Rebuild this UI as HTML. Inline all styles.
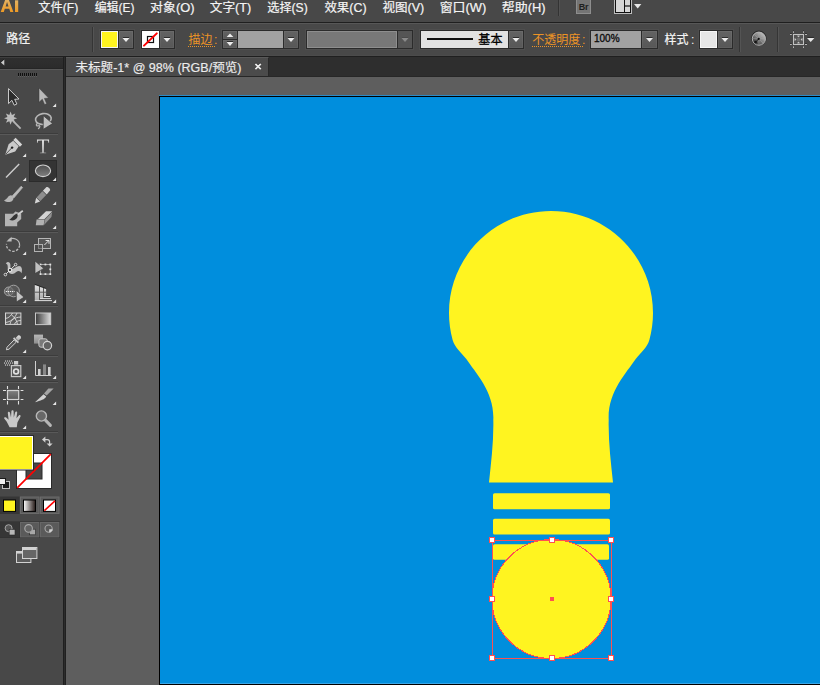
<!DOCTYPE html>
<html lang="zh"><head><meta charset="utf-8"><title>Adobe Illustrator</title>
<style>
html,body{margin:0;padding:0}
body{width:820px;height:685px;overflow:hidden;background:#484848;position:relative;font-family:"Liberation Sans",sans-serif;}
.g{display:block;position:static;margin:0;padding:0}
.a{position:absolute;box-sizing:border-box;display:block}
.t{position:absolute;overflow:hidden}
.t svg{position:absolute;left:0;top:0;display:block}
.t svg text{font-family:"Liberation Sans","Noto Sans CJK SC",sans-serif;font-size:12.3px;white-space:pre}
</style></head>
<body>
<header class="g" aria-label="menu bar">
<div class="a " style="left:0px;top:0px;width:820px;height:22px;background:#484848"></div>
<div class="a " style="left:0px;top:22px;width:820px;height:1px;background:#1f1f1f"></div>
<svg class="a" style="left:0px;top:0px" width="20" height="13" viewBox="0 0 20 13" ><defs><linearGradient id="lg" x1="0" y1="0" x2="0" y2="1"><stop offset="0" stop-color="#e2b264"/><stop offset="1" stop-color="#ee9a24"/></linearGradient></defs><path fill-rule="evenodd" d="M0.7 12L5.3 -0.5H8.8L13.4 12H10.3L9.3 8.8H4.8L3.8 12ZM5.6 6.5H8.5L7.05 1.9Z" fill="url(#lg)"/><rect x="15" y="0.3" width="3.2" height="11.7" fill="url(#lg)"/></svg>
<div class="t " style="left:37px;top:-1px;width:44px;height:19px"><svg width="44" height="19" viewBox="0 0 44 19"><text transform="translate(1.35 12.6) scale(0.99 1)" x="0" y="0" fill="#f4f4f4" stroke="#f4f4f4" stroke-width="0.2">文件(F)</text></svg></div>
<div class="t " style="left:94px;top:-1px;width:43px;height:19px"><svg width="43" height="19" viewBox="0 0 43 19"><text transform="translate(0.63 12.6) scale(0.97 1)" x="0" y="0" fill="#f4f4f4" stroke="#f4f4f4" stroke-width="0.2">编辑(E)</text></svg></div>
<div class="t " style="left:149px;top:-1px;width:48px;height:19px"><svg width="48" height="19" viewBox="0 0 48 19"><text transform="translate(1.1 12.6) scale(1.05 1)" x="0" y="0" fill="#f4f4f4" stroke="#f4f4f4" stroke-width="0.2">对象(O)</text></svg></div>
<div class="t " style="left:209px;top:-1px;width:45px;height:19px"><svg width="45" height="19" viewBox="0 0 45 19"><text transform="translate(0.73 12.6) scale(1.03 1)" x="0" y="0" fill="#f4f4f4" stroke="#f4f4f4" stroke-width="0.2">文字(T)</text></svg></div>
<div class="t " style="left:266px;top:-1px;width:45px;height:19px"><svg width="45" height="19" viewBox="0 0 45 19"><text transform="translate(1.23 12.6) scale(0.99 1)" x="0" y="0" fill="#f4f4f4" stroke="#f4f4f4" stroke-width="0.2">选择(S)</text></svg></div>
<div class="t " style="left:323px;top:-1px;width:46px;height:19px"><svg width="46" height="19" viewBox="0 0 46 19"><text transform="translate(1.45 12.6) scale(1.01 1)" x="0" y="0" fill="#f4f4f4" stroke="#f4f4f4" stroke-width="0.2">效果(C)</text></svg></div>
<div class="t " style="left:382px;top:-1px;width:45px;height:19px"><svg width="45" height="19" viewBox="0 0 45 19"><text transform="translate(0.5 12.6) scale(1.02 1)" x="0" y="0" fill="#f4f4f4" stroke="#f4f4f4" stroke-width="0.2">视图(V)</text></svg></div>
<div class="t " style="left:439px;top:-1px;width:50px;height:19px"><svg width="50" height="19" viewBox="0 0 50 19"><text transform="translate(0.67 12.6) scale(1.05 1)" x="0" y="0" fill="#f4f4f4" stroke="#f4f4f4" stroke-width="0.2">窗口(W)</text></svg></div>
<div class="t " style="left:501px;top:-1px;width:47px;height:19px"><svg width="47" height="19" viewBox="0 0 47 19"><text transform="translate(0.83 12.6) scale(1.05 1)" x="0" y="0" fill="#f4f4f4" stroke="#f4f4f4" stroke-width="0.2">帮助(H)</text></svg></div>
<div class="a " style="left:558px;top:0px;width:1px;height:16px;background:#333"></div>
<div class="a " style="left:559px;top:0px;width:1px;height:16px;background:#525252"></div>
<div class="a " style="left:576px;top:-1px;width:15px;height:15px;background:#747474;border:1px solid #8e8e8e;color:#1e1e1e;font-weight:bold;font-size:9px;line-height:14px;text-align:center;letter-spacing:-0.2px">Br</div>
<svg class="a" style="left:614px;top:0px" width="18" height="14" viewBox="0 0 18 14" ><rect x="0.5" y="-1.5" width="17" height="15" fill="#111" stroke="#bdbdbd"/><rect x="2" y="0" width="8" height="12" fill="#d6d6d6"/><rect x="11" y="0" width="5" height="5.4" fill="#d6d6d6"/><rect x="11" y="6.6" width="5" height="5.4" fill="#d6d6d6"/></svg>
<svg class="a" style="left:634px;top:4px" width="8" height="5" viewBox="0 0 8 5" ><path d="M0 0H7.4L3.7 4.6Z" fill="#e6e6e6"/></svg>
</header>
<section class="g" aria-label="control bar">
<div class="a " style="left:0px;top:23px;width:820px;height:33px;background:#484848"></div>
<div class="a " style="left:0px;top:23px;width:820px;height:1px;background:#575757"></div>
<div class="a " style="left:0px;top:55px;width:820px;height:1px;background:#4b4b4b"></div>
<div class="a " style="left:0px;top:56px;width:820px;height:1px;background:#1f1f1f"></div>
<div class="t " style="left:5px;top:30px;width:28px;height:19px"><svg width="28" height="19" viewBox="0 0 28 19"><text transform="translate(1.23 13.3) scale(0.97 1)" x="0" y="0" fill="#f4f4f4" stroke="#f4f4f4" stroke-width="0.2">路径</text></svg></div>
<div class="a " style="left:92px;top:27px;width:1px;height:25px;background:#353535"></div>
<div class="a " style="left:93px;top:27px;width:1px;height:25px;background:#545454"></div>
<div class="a " style="left:100px;top:30px;width:34px;height:19px;background:#2b2b2b;box-shadow:0 0 0 1px #4e4e4e"></div>
<div class="a " style="left:101px;top:31px;width:17px;height:17px;background:#fff420;border:1px solid #f4f4f4"></div>
<div class="a " style="left:119px;top:31px;width:14px;height:17px;background:linear-gradient(#636363,#575757);box-shadow:inset 0 0 0 1px rgba(255,255,255,0.05)"><svg class="a" style="left:0;top:0" width="14" height="17"><path d="M4 6.5H10" stroke="#2c2c2c" stroke-width="1"/><path d="M3.5 7H10.5L7 11.1Z" fill="#ececec"/></svg></div>
<div class="a " style="left:141px;top:30px;width:34px;height:19px;background:#2b2b2b;box-shadow:0 0 0 1px #4e4e4e"></div>
<div class="a " style="left:142px;top:31px;width:17px;height:17px;background:#fff"><svg class="a" style="left:0;top:0" width="17" height="17"><rect x="5.5" y="5.5" width="6" height="6" fill="none" stroke="#111" stroke-width="1.2"/><path d="M2 14.6L14.8 2.4" stroke="#f00" stroke-width="2" stroke-linecap="round"/></svg></div>
<div class="a " style="left:160px;top:31px;width:14px;height:17px;background:linear-gradient(#636363,#575757);box-shadow:inset 0 0 0 1px rgba(255,255,255,0.05)"><svg class="a" style="left:0;top:0" width="14" height="17"><path d="M4 6.5H10" stroke="#2c2c2c" stroke-width="1"/><path d="M3.5 7H10.5L7 11.1Z" fill="#ececec"/></svg></div>
<div class="t " style="left:187px;top:31px;width:28px;height:19px"><svg width="28" height="19" viewBox="0 0 28 19"><text transform="translate(1.46 12.7) scale(0.97 1)" x="0" y="0" fill="#ec9326">描边</text></svg></div>
<div class="t " style="left:214.4px;top:31px;width:6px;height:18px"><svg width="6" height="18" viewBox="0 0 6 18"><text transform="translate(0 12.7) scale(1 1)" x="0" y="0" fill="#ec9326">:</text></svg></div>
<div class="a " style="left:188px;top:46px;width:27px;height:1px;background:repeating-linear-gradient(90deg,#ec9326 0 1px,transparent 1px 2px)"></div>
<div class="a " style="left:222px;top:30px;width:77px;height:19px;background:#2b2b2b;box-shadow:0 0 0 1px #4e4e4e"></div>
<div class="a " style="left:223px;top:31px;width:14px;height:8px;background:linear-gradient(#636363,#575757);box-shadow:inset 0 0 0 1px rgba(255,255,255,0.05)"><svg class="a" style="left:0;top:0" width="14" height="8"><path d="M3.6 6.1H10.4L7 2.6Z" fill="#ececec"/></svg></div>
<div class="a " style="left:223px;top:40px;width:14px;height:8px;background:linear-gradient(#636363,#575757);box-shadow:inset 0 0 0 1px rgba(255,255,255,0.05)"><svg class="a" style="left:0;top:0" width="14" height="8"><path d="M4 1.5H10" stroke="#2c2c2c"/><path d="M3.6 2H10.4L7 5.9Z" fill="#ececec"/></svg></div>
<div class="a " style="left:238px;top:31px;width:45px;height:17px;background:#a2a2a2"></div>
<div class="a " style="left:284px;top:31px;width:14px;height:17px;background:linear-gradient(#636363,#575757);box-shadow:inset 0 0 0 1px rgba(255,255,255,0.05)"><svg class="a" style="left:0;top:0" width="14" height="17"><path d="M4 6.5H10" stroke="#2c2c2c" stroke-width="1"/><path d="M3.5 7H10.5L7 11.1Z" fill="#ececec"/></svg></div>
<div class="a " style="left:306px;top:30px;width:107px;height:19px;background:#2b2b2b;box-shadow:0 0 0 1px #4e4e4e"></div>
<div class="a " style="left:307px;top:31px;width:90px;height:17px;background:#787878;border:1px solid #8e8e8e"></div>
<div class="a " style="left:398px;top:31px;width:14px;height:17px;background:#555"><svg class="a" style="left:0;top:0" width="14" height="17"><path d="M4 6.5H10" stroke="#4a4a4a" stroke-width="1"/><path d="M3.5 7H10.5L7 11.1Z" fill="#8a8a8a"/></svg></div>
<div class="a " style="left:420px;top:30px;width:104px;height:19px;background:#2b2b2b;box-shadow:0 0 0 1px #4e4e4e"></div>
<div class="a " style="left:421px;top:31px;width:87px;height:17px;background:#e2e2e2"><div class="a" style="left:6px;top:7px;width:46px;height:2px;background:#111"></div></div>
<div class="t " style="left:477px;top:31px;width:28px;height:19px"><svg width="28" height="19" viewBox="0 0 28 19"><text transform="translate(1.35 13.2) scale(0.98 1)" x="0" y="0" fill="#000" stroke="#000" stroke-width="0.3">基本</text></svg></div>
<div class="a " style="left:509px;top:31px;width:14px;height:17px;background:linear-gradient(#636363,#575757);box-shadow:inset 0 0 0 1px rgba(255,255,255,0.05)"><svg class="a" style="left:0;top:0" width="14" height="17"><path d="M4 6.5H10" stroke="#2c2c2c" stroke-width="1"/><path d="M3.5 7H10.5L7 11.1Z" fill="#ececec"/></svg></div>
<div class="t " style="left:531px;top:31px;width:52px;height:19px"><svg width="52" height="19" viewBox="0 0 52 19"><text transform="translate(1.15 12.7) scale(0.98 1)" x="0" y="0" fill="#ec9326">不透明度</text></svg></div>
<div class="t " style="left:582.3px;top:31px;width:6px;height:18px"><svg width="6" height="18" viewBox="0 0 6 18"><text transform="translate(0 12.7) scale(1 1)" x="0" y="0" fill="#ec9326">:</text></svg></div>
<div class="a " style="left:532px;top:46px;width:51px;height:1px;background:repeating-linear-gradient(90deg,#ec9326 0 1px,transparent 1px 2px)"></div>
<div class="a " style="left:590px;top:30px;width:68px;height:19px;background:#2b2b2b;box-shadow:0 0 0 1px #4e4e4e"></div>
<div class="a " style="left:591px;top:31px;width:50px;height:17px;background:#a2a2a2;color:#0a0a0a;font-size:10px;line-height:15px;padding-left:3px;-webkit-text-stroke:0.3px #0a0a0a">100%</div>
<div class="a " style="left:642px;top:31px;width:15px;height:17px;background:linear-gradient(#636363,#575757);box-shadow:inset 0 0 0 1px rgba(255,255,255,0.05)"><svg class="a" style="left:0;top:0" width="15" height="17"><path d="M4.5 6.5H10.5" stroke="#2c2c2c" stroke-width="1"/><path d="M4 7H11L7.5 11.1Z" fill="#ececec"/></svg></div>
<div class="t " style="left:663px;top:31px;width:28px;height:19px"><svg width="28" height="19" viewBox="0 0 28 19"><text transform="translate(1.52 12.7) scale(0.97 1)" x="0" y="0" fill="#f4f4f4" stroke="#f4f4f4" stroke-width="0.2">样式</text></svg></div>
<div class="t " style="left:690.6px;top:31px;width:6px;height:18px"><svg width="6" height="18" viewBox="0 0 6 18"><text transform="translate(0 12.7) scale(1 1)" x="0" y="0" fill="#f4f4f4">:</text></svg></div>
<div class="a " style="left:699px;top:30px;width:34px;height:19px;background:#2b2b2b;box-shadow:0 0 0 1px #4e4e4e"></div>
<div class="a " style="left:700px;top:31px;width:17px;height:17px;background:#e6e6e6;border:1px solid #f6f6f6"></div>
<div class="a " style="left:718px;top:31px;width:14px;height:17px;background:linear-gradient(#636363,#575757);box-shadow:inset 0 0 0 1px rgba(255,255,255,0.05)"><svg class="a" style="left:0;top:0" width="14" height="17"><path d="M4 6.5H10" stroke="#2c2c2c" stroke-width="1"/><path d="M3.5 7H10.5L7 11.1Z" fill="#ececec"/></svg></div>
<div class="a " style="left:739px;top:27px;width:1px;height:25px;background:#353535"></div>
<div class="a " style="left:740px;top:27px;width:1px;height:25px;background:#545454"></div>
<svg class="a" style="left:750px;top:30px" width="18" height="18" viewBox="0 0 18 18" ><defs><linearGradient id="rc" x1="0.15" y1="0.9" x2="0.85" y2="0.1"><stop offset="0" stop-color="#2e2e2e"/><stop offset="0.5" stop-color="#7e7e7e"/><stop offset="1" stop-color="#c0c0c0"/></linearGradient></defs><circle cx="8.9" cy="8.2" r="7.2" fill="none" stroke="#262626" stroke-width="1"/><circle cx="8.9" cy="8.7" r="6.6" fill="url(#rc)" stroke="#b4b4b4" stroke-width="1"/><path d="M8.9 8.7L4.2 4.2M8.9 8.7L8.9 2.2M8.9 8.7L13.6 4.2M8.9 8.7L15.4 8.7M8.9 8.7L13.4 13.4M8.9 8.7L8.9 15.2M8.9 8.7L2.4 8.7" stroke="#b0b0b0" stroke-width="0.7" opacity="0.6"/><path d="M8.9 8.7L5 12.6" stroke="#1a1a1a" stroke-width="0.9"/><circle cx="8.7" cy="8.9" r="1.1" fill="#0c0c0c"/><circle cx="5.6" cy="12" r="1.3" fill="#141414"/></svg>
<div class="a " style="left:777px;top:27px;width:1px;height:25px;background:#353535"></div>
<div class="a " style="left:778px;top:27px;width:1px;height:25px;background:#545454"></div>
<svg class="a" style="left:789px;top:29px" width="20" height="20" viewBox="0 0 20 20" ><rect x="4.5" y="5.5" width="10" height="10" fill="#545454" stroke="#c2c2c2" stroke-width="1"/><path d="M1 4.7H2.8M16 4.7H18M1 14.7H2.8M16 14.7H18M4.5 1.4V2.4M14.5 1.4V2.4" stroke="#262626" stroke-width="0.8"/><path d="M1 5.5H2.8M16 5.5H18M1 15.5H2.8M16 15.5H18M4.5 2.3V3.9M14.5 2.3V3.9M4.5 17.4V19M14.5 17.4V19" stroke="#b4b4b4" stroke-width="1"/><rect x="8" y="9" width="3" height="3" fill="#6c6c6c"/><path d="M8.3 7H10.7M9.5 7V8.2M8.3 14H10.7M9.5 14V12.8M6 9.3V11.7M6 10.5H7.2M13 9.3V11.7M13 10.5H11.8" stroke="#c8c8c8" stroke-width="0.9" fill="none"/></svg>
<svg class="a" style="left:807px;top:36px" width="8" height="7" viewBox="0 0 8 7" ><path d="M0.5 1.4H7" stroke="#2a2a2a"/><path d="M0 1.9H7.4L3.7 6.1Z" fill="#e8e8e8"/></svg>
</section>
<section class="g" aria-label="document tabs">
<div class="a " style="left:62px;top:57px;width:1px;height:628px;background:#4c4c4c"></div>
<div class="a " style="left:63px;top:57px;width:1px;height:628px;background:#1f1f1f"></div>
<div class="a " style="left:64px;top:57px;width:1px;height:628px;background:#2c2c2c"></div>
<div class="a " style="left:65px;top:57px;width:1px;height:628px;background:#202020"></div>
<div class="a " style="left:66px;top:57px;width:754px;height:20px;background:#2e2e2e"></div>
<div class="a " style="left:66px;top:76px;width:754px;height:1px;background:#272727"></div>
<div class="a " style="left:66px;top:57px;width:203px;height:19px;background:#4b4b4b;border-top:1px solid #595959;border-right:1px solid #282828"></div>
<div class="t " style="left:75px;top:59px;width:171px;height:19px"><svg width="171" height="19" viewBox="0 0 171 19"><text transform="translate(0.56 13.4) scale(1.02 1)" x="0" y="0" fill="#ececec" stroke="#ececec" stroke-width="0.15">未标题-1* @ 98% (RGB/预览)</text></svg></div>
<svg class="a" style="left:254px;top:62px" width="9" height="8" viewBox="0 0 9 8" ><path d="M1.4 1.2L6.8 6.4M6.8 1.2L1.4 6.4" stroke="#2a2a2a" stroke-width="1.7"/><path d="M1.4 1.9L6.8 7.1M6.8 1.9L1.4 7.1" stroke="#ececec" stroke-width="1.7"/></svg>
<div class="a " style="left:66px;top:77px;width:754px;height:608px;background:#5e5e5e"></div>
</section>
<aside class="g" aria-label="tools">
<div class="a " style="left:0px;top:57px;width:63px;height:628px;background:#484848"></div>
<div class="a " style="left:0px;top:57px;width:63px;height:1px;background:#3e3e3e"></div>
<div class="a " style="left:0px;top:58px;width:63px;height:10px;background:linear-gradient(#2f2f2f,#2b2b2b)"></div>
<div class="a " style="left:0px;top:68px;width:63px;height:1px;background:#252525"></div>
<div class="a " style="left:0px;top:69px;width:63px;height:1px;background:#595959"></div>
<div class="a " style="left:18px;top:73px;width:20px;height:3px;background:repeating-linear-gradient(90deg,#101010 0 1px,transparent 1px 2px)"></div>
<div class="a " style="left:18px;top:76px;width:20px;height:1px;background:repeating-linear-gradient(90deg,#5e5e5e 0 1px,transparent 1px 2px)"></div>
<svg class="a" style="left:0;top:0" width="66" height="685" viewBox="0 0 66 685"><defs><linearGradient id="gv" x1="0" y1="0" x2="0" y2="1"><stop offset="0" stop-color="#e2e2e2"/><stop offset="1" stop-color="#a8a8a8"/></linearGradient><linearGradient id="gel" x1="0" y1="0" x2="0" y2="1"><stop offset="0" stop-color="#4e4e4e"/><stop offset="1" stop-color="#808080"/></linearGradient><linearGradient id="gh" x1="0" y1="0" x2="1" y2="0"><stop offset="0" stop-color="#3a3a3a"/><stop offset="1" stop-color="#dcdcdc"/></linearGradient><linearGradient id="gwb" x1="0" y1="0" x2="1" y2="0"><stop offset="0" stop-color="#fff"/><stop offset="1" stop-color="#231815"/></linearGradient><linearGradient id="gab" x1="0" y1="0" x2="0" y2="1"><stop offset="0" stop-color="#808080"/><stop offset="1" stop-color="#5a5a5a"/></linearGradient></defs><path d="M4.2 58.8V65L0.6 61.9Z" fill="#161616" /><path d="M4.3 59.4V65.4L0.9 62.4Z" fill="#cacaca" /><path d="M8.5 88.6V103.6L11.9 100.3L14.2 105.2L16.9 104L14.7 99.3L19 99Z" fill="#2c2c2c" stroke="#d0d0d0" stroke-width="0.95" stroke-linejoin="miter"/><path d="M39 88V102.3L42.3 99.2L44.6 104.6L46.7 103.7L44.4 98.4L48.6 98.1Z" fill="#b9b9b9" stroke="#3a3a3a" stroke-width="0.5" /><path d="M56.1 103.5V107H52.6Z" fill="#e6e6e6" /><path d="M10.6 111.6L11.9 115.06L15.27 113.53L13.74 116.9L17.2 118.2L13.74 119.5L15.27 122.87L11.9 121.34L10.6 124.8L9.3 121.34L5.93 122.87L7.46 119.5L4 118.2L7.46 116.9L5.93 113.53L9.3 115.06Z" fill="#bcbcbc" /><path d="M13.2 121.2L20.6 128.6" fill="none" stroke="#b4b4b4" stroke-width="1.9" stroke-linecap="butt"/><ellipse cx="43.4" cy="119" rx="7.9" ry="5.4" fill="none" stroke="#b6b6b6" stroke-width="1.6" transform="rotate(-8 43.4 119)"/><path d="M37.6 123.4C35.4 124.4 36.4 126.6 38.4 125.8C40.6 125 40 128 38 128.8" fill="none" stroke="#b6b6b6" stroke-width="1.3" /><path d="M43.3 115.6L43.2 129.4L52.6 123.6Z" fill="#bebebe" stroke="#333" stroke-width="0.7" /><rect x="0" y="133" width="58" height="1" fill="#3c3c3c"/><rect x="0" y="134" width="58" height="1" fill="#595959"/><path d="M5.3 154.7L8.6 144.3L13.2 140.8L18.7 146.3L15.2 151.4Z" fill="#cacaca" /><path d="M5.8 154.2L11.6 148" fill="none" stroke="#3a3a3a" stroke-width="0.8" /><circle cx="12.1" cy="147.6" r="1.2" fill="#1e1e1e"/><path d="M15.6 137.8L22.2 144.4L19.9 146.7L13.3 140.1Z" fill="#d6d6d6" /><path d="M26.1 153.5V157H22.6Z" fill="#e6e6e6" /><path d="M39.83 153.3V152.76L42.01 152.48V140.43H41.49Q38.9 140.43 37.94 140.64L37.67 142.78H36.98V139.55H49.08V142.78H48.38L48.1 140.64Q47.8 140.56 46.76 140.51Q45.73 140.45 44.5 140.45H43.99V152.48L46.18 152.76V153.3Z" fill="url(#gv)" /><path d="M56.1 153.5V157H52.6Z" fill="#e6e6e6" /><path d="M6 177.6L19.2 164" fill="none" stroke="#cdcdcd" stroke-width="1.4" /><path d="M26.1 177.5V181H22.6Z" fill="#e6e6e6" /><rect x="29.5" y="160.5" width="27" height="21" fill="#343434" stroke="#2b2b2b"/><ellipse cx="43" cy="170.8" rx="7.6" ry="5.8" fill="url(#gel)" stroke="#d2d2d2" stroke-width="1.1"/><path d="M56.1 177.5V181H52.6Z" fill="#e6e6e6" /><path d="M21.2 186.2L22.6 187.6L13.8 198L12 196.2Z" fill="#bcbcbc" stroke="#bcbcbc" stroke-width="0.7" /><path d="M11.6 195.4C7.6 195 8 199.4 4 200.4C7.4 203 13.6 202.6 13.6 197.4Z" fill="#b6b6b6" /><path d="M34.8 203.4L36.2 197.8L40.1 201.5Z" fill="#d6d6d6" /><path d="M36.6 197.4L40.4 201.1L46.2 194.9L42.4 191.2Z" fill="#8e8e8e" /><path d="M42.9 190.7L46.7 194.4L50 190.6C50.9 189.2 48 186.4 46.5 187.1Z" fill="#d2d2d2" /><path d="M56.1 201.5V205H52.6Z" fill="#e6e6e6" /><path d="M5 213.8H13.2L15.4 211.6L21.2 213.4V219L17.2 222.6V226.3H5Z" fill="#b4b4b4" /><path d="M9.2 219.8C12 218.6 13.4 214.6 17.4 213.6C18.8 217.8 15 222 9.2 219.8Z" fill="#343434" /><path d="M17.8 214.6L22.8 210.8" fill="none" stroke="#cfcfcf" stroke-width="1.8" /><path d="M38 219L46 211.3H52.2L44.6 219Z" fill="#d2d2d2" /><path d="M36.6 219.6H44.6L43.6 225.2H35.8Z" fill="#b2b2b2" /><path d="M45 219.4L52.2 212L51.4 217L44 225Z" fill="#909090" /><path d="M56.1 225.5V229H52.6Z" fill="#e6e6e6" /><rect x="0" y="231" width="58" height="1" fill="#3c3c3c"/><rect x="0" y="232" width="58" height="1" fill="#595959"/><path d="M8.2 240.6A6.6 6.6 0 0 1 19.6 245.4" fill="none" stroke="#bababa" stroke-width="1.2" /><path d="M19.6 245.4A6.6 6.6 0 1 1 6.5 243.8" fill="none" stroke="#bababa" stroke-width="1.3" stroke-dasharray="2.5 1.5"/><path d="M6.4 241.6L11.6 236.8V241.6Z" fill="#bcbcbc" /><path d="M26.1 251.5V255H22.6Z" fill="#e6e6e6" /><rect x="38.5" y="238.5" width="12" height="10" fill="#565656" stroke="#b6b6b6"/><path d="M44.4 245L48.6 240.8M45.6 240.5H49V243.8" fill="none" stroke="#e0e0e0" stroke-width="1" /><rect x="34.5" y="244.5" width="8" height="7" fill="#4a4a4a" fill-opacity="0.5" stroke="#b2b2b2"/><path d="M56.1 251.5V255H52.6Z" fill="#e6e6e6" /><path d="M5.8 263.4C8.6 260 11.6 263.6 10.2 268C12.6 271.2 15.8 266 19 266C22.4 266.2 22.4 270.6 21.4 273.2C20.4 270.6 18 270.2 16.2 272C13.2 275.2 8.8 274.4 8 270.4C7.4 267.2 8.6 264.4 5.8 263.4Z" fill="#bfbfbf" /><path d="M5.4 274.6L15.6 264.6" fill="none" stroke="#f2f2f2" stroke-width="0.9" /><circle cx="5.4" cy="274.6" r="1.3" fill="#444" stroke="#f2f2f2" stroke-width="0.8"/><circle cx="10" cy="270" r="1.8" fill="#444" stroke="#f2f2f2" stroke-width="1"/><circle cx="15.6" cy="264.6" r="1.3" fill="#444" stroke="#f2f2f2" stroke-width="0.8"/><path d="M26.1 275.5V279H22.6Z" fill="#e6e6e6" /><rect x="40.5" y="264.5" width="9.8" height="9.6" fill="none" stroke="#bdbdbd" stroke-width="0.8"/><rect x="39.6" y="263.6" width="1.8" height="1.8" fill="#e4e4e4"/><rect x="39.6" y="268.4" width="1.8" height="1.8" fill="#e4e4e4"/><rect x="39.6" y="273.2" width="1.8" height="1.8" fill="#e4e4e4"/><rect x="44.5" y="263.6" width="1.8" height="1.8" fill="#e4e4e4"/><rect x="44.5" y="273.2" width="1.8" height="1.8" fill="#e4e4e4"/><rect x="49.4" y="263.6" width="1.8" height="1.8" fill="#e4e4e4"/><rect x="49.4" y="268.4" width="1.8" height="1.8" fill="#e4e4e4"/><rect x="49.4" y="273.2" width="1.8" height="1.8" fill="#e4e4e4"/><path d="M35 261V273.6L43.8 268.4Z" fill="#c0c0c0" stroke="#3c3c3c" stroke-width="0.7" /><circle cx="8.8" cy="291.4" r="4.4" fill="#646464" stroke="#a4a4a4" stroke-width="1"/><circle cx="13.6" cy="291" r="5.8" fill="#646464" fill-opacity="0.6" stroke="#a4a4a4" stroke-width="1"/><path d="M5.8 291.5H14.5" fill="none" stroke="#fff" stroke-width="1.2" stroke-dasharray="1.1 0.9"/><path d="M16.2 290.2L16.4 302L24 297.2Z" fill="#c4c4c4" stroke="#3a3a3a" stroke-width="0.7" /><path d="M26.1 299.5V303H22.6Z" fill="#e6e6e6" /><path d="M34.8 284.3L46.2 288.6" fill="none" stroke="#242424" stroke-width="0.9" /><path d="M34.8 284.9L39.1 286.5V301.1H34.8Z" fill="url(#gv)" /><path d="M40 286.9L43.1 288V299.1H40Z" fill="url(#gv)" /><path d="M44 288.4L46.1 289.1V297H44Z" fill="url(#gv)" /><path d="M34.8 292.2H46.1" fill="none" stroke="#505050" stroke-width="0.9" /><path d="M46.3 295.6H49.8" fill="none" stroke="#262626" stroke-width="0.8" /><rect x="44" y="296" width="6.1" height="1" fill="#dedede"/><rect x="40" y="298.1" width="11.1" height="1" fill="#dedede"/><rect x="34.8" y="300.1" width="17.2" height="1" fill="#dedede"/><path d="M56.1 299.5V303H52.6Z" fill="#e6e6e6" /><rect x="0" y="305" width="58" height="1" fill="#3c3c3c"/><rect x="0" y="306" width="58" height="1" fill="#595959"/><rect x="5.5" y="313" width="15.4" height="11.4" fill="#5c5c5c" stroke="#d4d4d4" stroke-width="1"/><path d="M5.5 318.5C9 318 11 315.5 12.5 313M5.5 322.5C10 322 14.5 319 17 313M10 324.4C10.5 320 14 317.5 20.9 317M14.5 324.4C15 322 17.5 320.5 20.9 320.5M11.5 315C14 316.5 16.5 319.5 17.5 324.4" fill="none" stroke="#dadada" stroke-width="0.9" /><rect x="35.5" y="313" width="15.2" height="11.6" fill="url(#gh)" stroke="#c8c8c8" stroke-width="1"/><path d="M6.4 349.8L7 347.2L14.2 339.8L16.4 342L9 349.2Z" fill="#555" stroke="#d0d0d0" stroke-width="1" /><path d="M13 338.4L17.8 343.2L19 342L14.2 337.2Z" fill="#cfcfcf" /><path d="M15.6 338L18.4 340.8L20.8 338.2C21.8 336.8 19.6 334.4 18 335.4Z" fill="url(#gv)" /><path d="M26.1 349.5V353H22.6Z" fill="#e6e6e6" /><rect x="34" y="334.6" width="9" height="9" fill="url(#gv)" opacity="0.72"/><rect x="38.9" y="338.8" width="8.4" height="8.4" rx="2" fill="#7a7a7a" stroke="#c8c8c8" stroke-width="1"/><circle cx="47.4" cy="345.6" r="4.2" fill="#636363" stroke="#d4d4d4" stroke-width="1.2"/><rect x="0" y="355" width="58" height="1" fill="#3c3c3c"/><rect x="0" y="356" width="58" height="1" fill="#595959"/><rect x="11.4" y="365.6" width="9.4" height="11" fill="#585858" stroke="#c8c8c8" stroke-width="1.2"/><circle cx="16.1" cy="371.4" r="2.4" fill="none" stroke="#e0e0e0" stroke-width="1.7"/><rect x="14" y="361" width="4.2" height="3.6" fill="#cfcfcf"/><rect x="5" y="360.5" width="1.1" height="1.1" fill="#dcdcdc"/><rect x="7" y="360.5" width="1.1" height="1.1" fill="#dcdcdc"/><rect x="9" y="360.5" width="1.1" height="1.1" fill="#dcdcdc"/><rect x="11" y="360.5" width="1.1" height="1.1" fill="#dcdcdc"/><rect x="4" y="362.5" width="1.1" height="1.1" fill="#dcdcdc"/><rect x="6" y="362.5" width="1.1" height="1.1" fill="#dcdcdc"/><rect x="8" y="362.5" width="1.1" height="1.1" fill="#dcdcdc"/><rect x="10" y="362.5" width="1.1" height="1.1" fill="#dcdcdc"/><rect x="12" y="362.5" width="1.1" height="1.1" fill="#dcdcdc"/><rect x="5" y="364.5" width="1.1" height="1.1" fill="#dcdcdc"/><rect x="7" y="364.5" width="1.1" height="1.1" fill="#dcdcdc"/><rect x="9" y="364.5" width="1.1" height="1.1" fill="#dcdcdc"/><path d="M26.1 375.5V379H22.6Z" fill="#e6e6e6" /><path d="M35.5 361V375.5H51.4" fill="none" stroke="#d0d0d0" stroke-width="1" /><rect x="38" y="369" width="2.6" height="6" fill="#d2d2d2"/><rect x="43" y="364.4" width="3" height="10.6" fill="#888"/><rect x="48" y="367" width="2.6" height="8" fill="#d2d2d2"/><path d="M56.1 375.5V379H52.6Z" fill="#e6e6e6" /><rect x="0" y="381" width="58" height="1" fill="#3c3c3c"/><rect x="0" y="382" width="58" height="1" fill="#595959"/><rect x="7.5" y="390.5" width="11.2" height="9" fill="url(#gab)" stroke="#d4d4d4" stroke-width="1.2"/><path d="M3 390.5H6M20.6 390.5H23.4M3 399.5H6M20.6 399.5H23.4M7.5 386V389M7.5 401V404.4M18.5 386V389M18.5 401V404.4" fill="none" stroke="#e0e0e0" stroke-width="1.1" /><path d="M35 402.2L43.6 394.2L46.2 396.4C45.2 399.2 40.4 400.6 35 402.2Z" fill="#d2d2d2" /><path d="M44 393.4L48.4 388.4H53.6L46.6 395.6Z" fill="#a4a4a4" /><path d="M56.1 401.5V405H52.6Z" fill="#e6e6e6" /><path d="M9.6 427.2L6.6 421.6L4.2 418.6C3.8 417.4 5.2 416.8 6.2 417.6L8.6 419.8L7.8 413C7.8 411.6 9.6 411.4 10 412.8L11 417.6L11.4 411.2C11.6 409.8 13.6 409.8 13.6 411.2L13.8 417.4L15.2 412.2C15.6 411 17.4 411.4 17.2 412.8L16.4 418.2L18.8 415.4C19.8 414.4 21.2 415.4 20.4 416.8L17.4 422.4L16.8 427.2Z" fill="#c8c8c8" /><path d="M26.1 425.5V429H22.6Z" fill="#e6e6e6" /><circle cx="41.4" cy="416" r="5.1" fill="#686868" stroke="#b8b8b8" stroke-width="1.4"/><path d="M45.6 420.4L50.4 425.4" fill="none" stroke="#b6b6b6" stroke-width="3" stroke-linecap="round"/><rect x="0" y="431" width="58" height="1" fill="#3c3c3c"/><rect x="0" y="432" width="58" height="1" fill="#595959"/><rect x="16.5" y="453.5" width="35" height="35" fill="#fff" stroke="#2a2a2a"/><rect x="26" y="463" width="16" height="16" fill="#484848" stroke="#2a2a2a" stroke-width="1"/><path d="M17.2 487.8L50.8 454.2" fill="none" stroke="#ff0000" stroke-width="1.7" /><rect x="-1" y="435.5" width="34.5" height="34.5" fill="#fff" stroke="#2a2a2a"/><rect x="0" y="437" width="32" height="32" fill="#fff420"/><path d="M44 439.6H47.4C49 439.6 49.6 440.4 49.6 442V444.4" fill="none" stroke="#d0d0d0" stroke-width="1.2" /><path d="M42 439.6L45.4 436.4V442.8Z" fill="#d0d0d0" /><path d="M46.6 443.4H52.6L49.6 446.6Z" fill="#d0d0d0" /><rect x="2.5" y="481.5" width="7" height="7" fill="#1a1a1a" stroke="#c0c0c0"/><rect x="-0.5" y="478.5" width="6" height="6" fill="#f0f0f0" stroke="#1a1a1a"/><rect x="0" y="496.5" width="19.5" height="17.5" fill="#363636"/><rect x="20.5" y="497" width="18.5" height="16.5" fill="#5a5a5a" stroke="#6a6a6a"/><rect x="40.5" y="497" width="18.5" height="16.5" fill="#5a5a5a" stroke="#6a6a6a"/><rect x="3.5" y="500" width="12" height="11.4" fill="#fff420" stroke="#000"/><rect x="23.5" y="500" width="12" height="11.4" fill="url(#gwb)" stroke="#000"/><rect x="43.5" y="500" width="12" height="11.4" fill="#fff" stroke="#000"/><path d="M44.4 510.6L55 500.8" fill="none" stroke="#f00" stroke-width="1.6" /><rect x="0" y="521.5" width="60" height="16.5" fill="#2f2f2f"/><rect x="0" y="522" width="19.5" height="15.5" fill="#363636"/><rect x="20.5" y="522.5" width="18.5" height="14.5" fill="#5a5a5a" stroke="#676767"/><rect x="40.5" y="522.5" width="18.5" height="14.5" fill="#5a5a5a" stroke="#676767"/><circle cx="8.6" cy="528.2" r="3.5" fill="#555" stroke="#a6a6a6" stroke-width="1"/><rect x="9.2" y="529.4" width="5.8" height="5.6" fill="#b8b8b8" stroke="#2a2a2a" stroke-width="0.6"/><rect x="29.6" y="529.2" width="5.8" height="5.6" fill="#a8a8a8" stroke="#2a2a2a" stroke-width="0.6"/><circle cx="28.6" cy="528.4" r="3.8" fill="#646464" stroke="#ababab" stroke-width="1.1"/><circle cx="48.6" cy="528.6" r="3.6" fill="#5a5a5a" stroke="#a6a6a6" stroke-width="1.1"/><path d="M49.2 529.2H52.6V530.4L50.4 532.6H49.2Z" fill="#cfcfcf" /><rect x="16.5" y="551.5" width="14.4" height="11" fill="#5c5c5c" stroke="#d2d2d2" stroke-width="1"/><rect x="22.5" y="547.5" width="14.4" height="11" fill="#666" stroke="#d2d2d2" stroke-width="1"/><rect x="23" y="548" width="13.4" height="2" fill="#d2d2d2"/><rect x="17" y="552" width="5" height="1.6" fill="#d2d2d2"/></svg>
</aside>
<main class="g" aria-label="artboard">
<svg class="a" style="left:0;top:0" width="820" height="685" viewBox="0 0 820 685"><rect x="159" y="95" width="661" height="1" fill="#2a8ac6"/><rect x="159" y="96" width="661" height="589" fill="#008edd"/><path d="M159.5 96V685M159 96.5H820M159 684.5H820" stroke="#000" stroke-width="1" fill="none"/><path d="M160 683.5H820" stroke="#3aa6e6" stroke-width="1"/><path d="M551 211C494.7 211 449 256.7 449 313C449 322.13 450.22 331.2 452.64 340C454.76 347.7 461.5 352.6 466.3 359C475.6 373 494.6 392 493.3 420C493.8 440 491.2 462 489 482.5L613 482.5C610.8 462 608.2 440 608.7 420C607.4 392 626.4 373 635.7 359C640.5 352.6 647.24 347.7 649.36 340C651.78 331.2 653 322.13 653 313C653 256.7 607.3 211 551 211Z" fill="#fff420"/><rect x="493" y="493.2" width="117" height="16.1" rx="1.6" fill="#fff420"/><rect x="493" y="518.8" width="117" height="15.8" rx="1.6" fill="#fff420"/><rect x="493" y="544.3" width="116" height="15.5" rx="1.6" fill="#fff420"/><circle cx="551.5" cy="599" r="59.5" fill="#fff420" stroke="#ff5050" stroke-width="1" shape-rendering="crispEdges"/><rect x="492.5" y="540.5" width="119" height="118" fill="none" stroke="#ff5050" stroke-width="1" shape-rendering="crispEdges"/><rect x="489.5" y="537.5" width="5" height="5" fill="#fff" stroke="#ff5050" stroke-width="1"/><rect x="489.5" y="596.5" width="5" height="5" fill="#fff" stroke="#ff5050" stroke-width="1"/><rect x="489.5" y="655.5" width="5" height="5" fill="#fff" stroke="#ff5050" stroke-width="1"/><rect x="549.5" y="537.5" width="5" height="5" fill="#fff" stroke="#ff5050" stroke-width="1"/><rect x="550" y="597" width="4" height="4" fill="#ff5050"/><rect x="549.5" y="655.5" width="5" height="5" fill="#fff" stroke="#ff5050" stroke-width="1"/><rect x="608.5" y="537.5" width="5" height="5" fill="#fff" stroke="#ff5050" stroke-width="1"/><rect x="608.5" y="596.5" width="5" height="5" fill="#fff" stroke="#ff5050" stroke-width="1"/><rect x="608.5" y="655.5" width="5" height="5" fill="#fff" stroke="#ff5050" stroke-width="1"/></svg>
</main>
</body></html>
